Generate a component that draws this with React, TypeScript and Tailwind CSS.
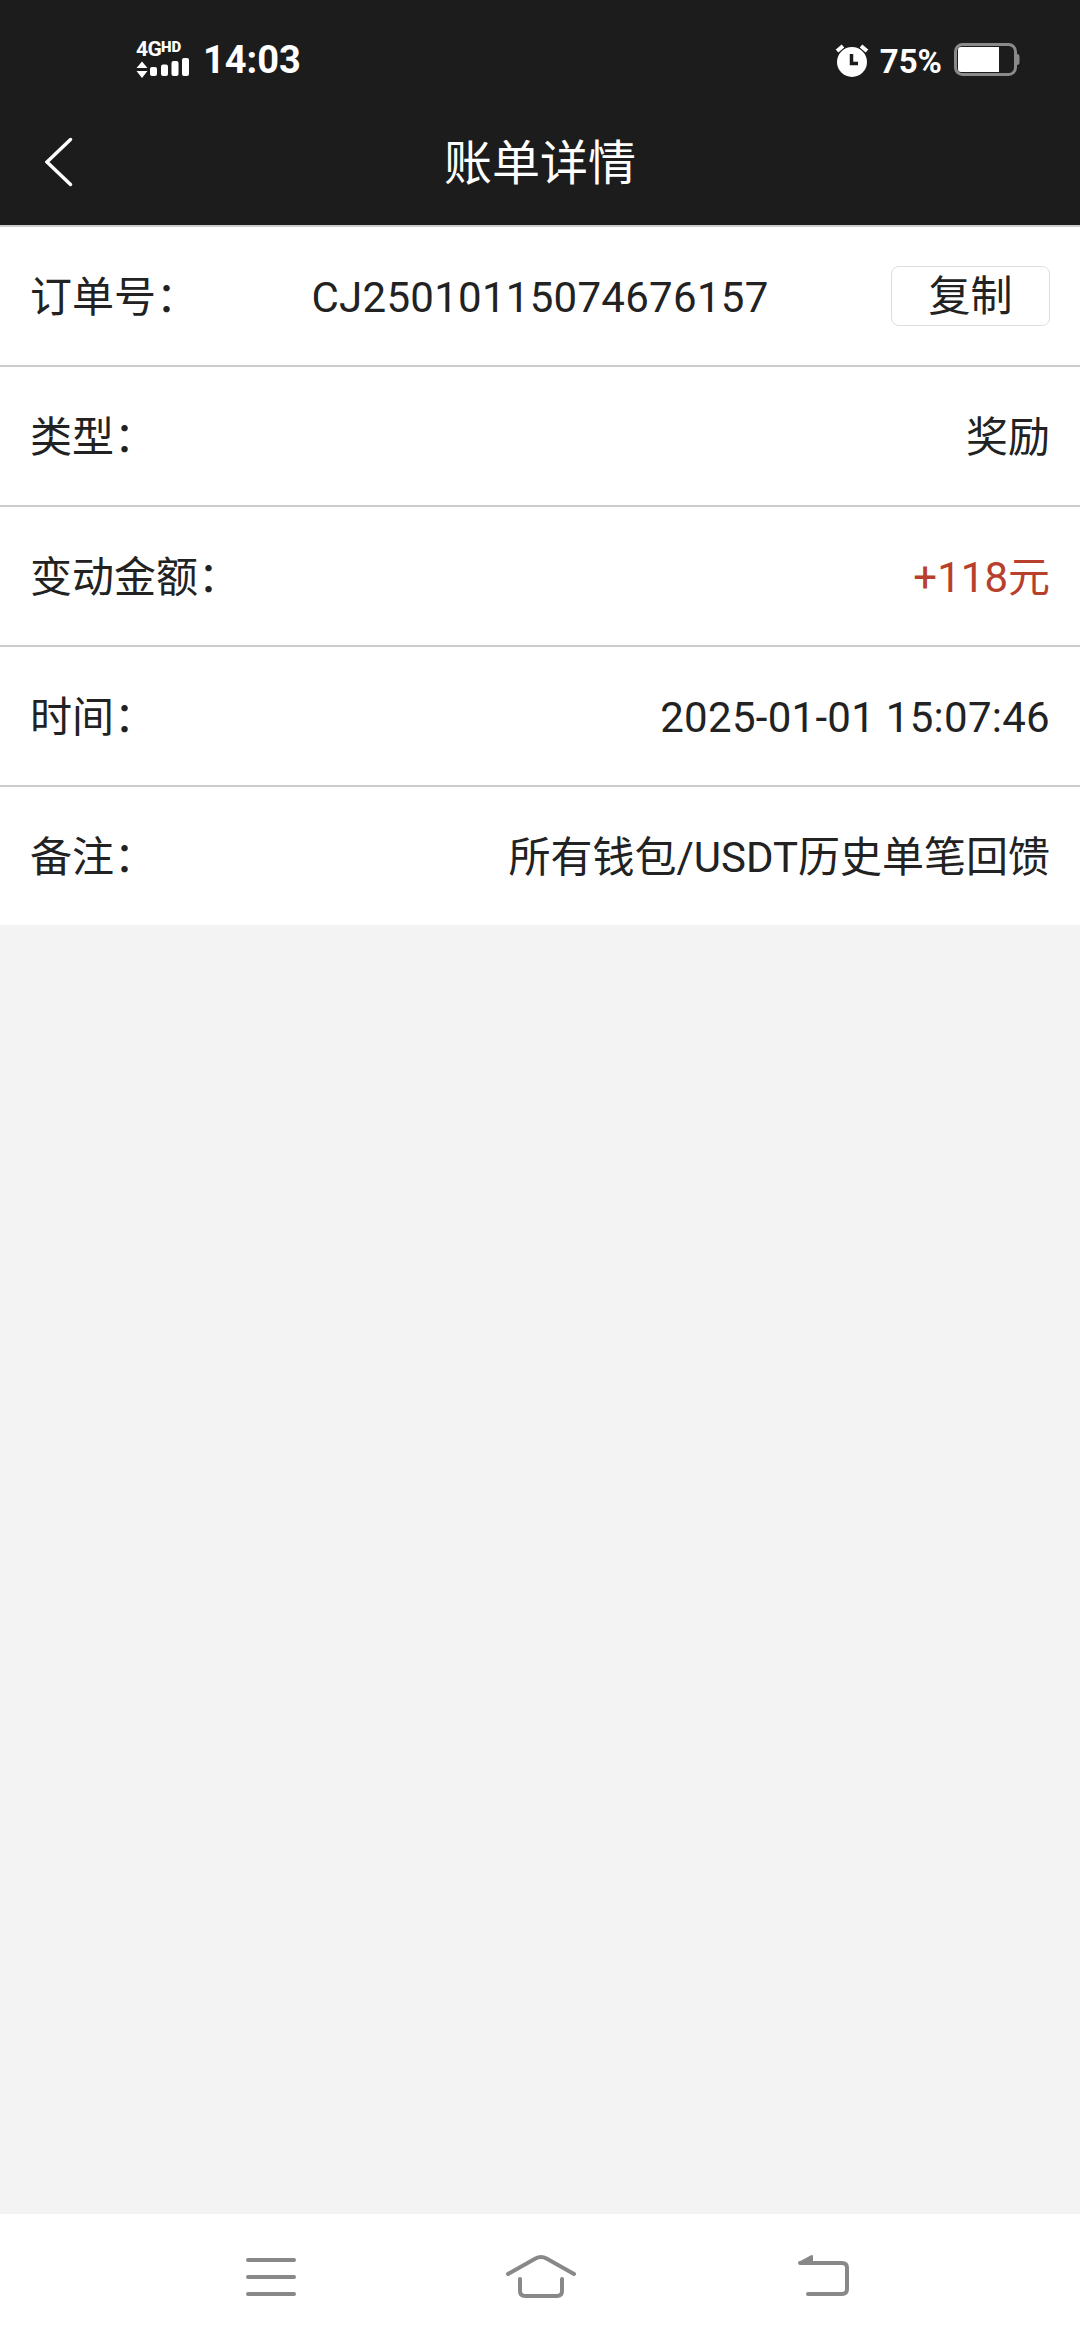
import React from "react";

type Row = {
  label: string;
  value: string;
  valueClass?: string;
};

const rows: Row[] = [
  { label: "类型：", value: "奖励" },
  { label: "变动金额：", value: "+118元", valueClass: "text-[#b93f2d]" },
  {
    label: "时间：",
    value: "2025-01-01 15:07:46",
    valueClass: "tracking-[0.28px]",
  },
  { label: "备注：", value: "所有钱包/USDT历史单笔回馈" },
];

const StatusBar: React.FunctionComponent<{}> = () => {
  return (
    <div className="flex h-[99px] items-center justify-between pt-5 pl-[136px] pr-[60px] font-bold">
      <div className="flex items-center">
        <div className="flex w-[54px] flex-col">
          <div className="flex h-[17px] items-start">
            <span className="w-[25px] text-[21px] leading-[17px] tracking-[-0.5px]">
              4G
            </span>
            <span className="text-[15px] leading-[12px] font-black">HD</span>
          </div>
          <svg width="54" height="20" viewBox="0 0 54 20" fill="white">
            <path d="M6 3.500 L11.500 10 H0.500 Z M0.500 13 H11.500 L6 20 Z" />
            <rect x="14" y="9" width="7" height="9" rx="2" />
            <rect x="25" y="6.500" width="7" height="11.500" rx="2" />
            <rect x="35.500" y="3" width="7" height="15" rx="2" />
            <rect x="46" y="0" width="7" height="18" rx="2" />
          </svg>
        </div>
        <span className="ml-[13px] pt-px text-[38px] leading-[44px]">
          14:03
        </span>
      </div>
      <div className="flex items-center">
        <svg width="34" height="36" viewBox="0 0 34 36" fill="none">
          <circle cx="17" cy="20" r="15" fill="white" />
          <path d="M2 9 L8 4 M26 4 L32 9" stroke="white" strokeWidth="4" />
          <path d="M16.500 12 V21.500 H23" stroke="#1c1c1c" strokeWidth="3.500" />
        </svg>
        <span className="ml-[11px] pt-1 text-[33px] leading-[38px]">75%</span>
        <svg
          className="ml-3"
          width="66"
          height="34"
          viewBox="0 0 66 34"
          fill="none"
        >
          <rect
            x="1.500"
            y="1.500"
            width="60"
            height="30"
            rx="7"
            stroke="#8a8a8a"
            strokeWidth="3"
          />
          <path d="M63 11 q2.500 0 2.500 3 v5 q0 3 -2.500 3 z" fill="#8a8a8a" />
          <path d="M7 4 H45 V29 H7 Q4 29 4 26 V7 Q4 4 7 4 Z" fill="white" />
        </svg>
      </div>
    </div>
  );
};

const TitleBar: React.FunctionComponent<{}> = () => {
  return (
    <div className="grid h-[126px] grid-cols-[1fr_auto_1fr] items-center">
      <button type="button" aria-label="返回" className="pl-[45px]">
        <svg width="28" height="50" viewBox="0 0 28 50" fill="none">
          <path
            d="M25.500 2.500 L2 25 L25.500 47.500"
            stroke="white"
            strokeWidth="3.400"
            strokeLinecap="round"
          />
        </svg>
      </button>
      <h1 className="pt-1 text-[48px] leading-[60px] font-normal">账单详情</h1>
    </div>
  );
};

const NavBar: React.FunctionComponent<{}> = () => {
  return (
    <nav className="flex h-[126px] items-center bg-white pl-[245px]">
      <svg width="52" height="40" viewBox="0 0 52 40" fill="none">
        <path
          d="M3 3 H49 M3 20 H49 M3 37 H49"
          stroke="#888888"
          strokeWidth="4"
          strokeLinecap="round"
        />
      </svg>
      <svg
        className="ml-52"
        width="72"
        height="46"
        viewBox="0 0 72 46"
        fill="none"
      >
        <path
          d="M3 20 L30.500 4.500 Q36 1.500 41.500 4.500 L69 20 M15 25 V37 Q15 42 20 42 H52 Q57 42 57 37 V25"
          stroke="#888888"
          strokeWidth="4"
          strokeLinecap="round"
        />
      </svg>
      <svg
        className="ml-[221px]"
        width="52"
        height="44"
        viewBox="0 0 52 44"
        fill="none"
      >
        <path
          d="M2 8 H44 Q49 8 49 13 V34 Q49 39 44 39 H10"
          stroke="#888888"
          strokeWidth="4"
          strokeLinecap="round"
        />
        <path d="M0.500 7 L13.500 0 Q15 0 15 1 V9 H2 Z" fill="#888888" />
      </svg>
    </nav>
  );
};

const App: React.FunctionComponent<{}> = () => {
  return (
    <div className="flex h-[2340px] w-[1080px] flex-col bg-[#f3f3f3] font-[Roboto,'Noto_Sans_CJK_SC',sans-serif]">
      <header className="bg-[#1c1c1c] text-white">
        <StatusBar />
        <TitleBar />
      </header>
      <main className="flex-1 text-[42px] leading-[56px] text-[#222222]">
        <div className="grid h-[140px] grid-cols-[1fr_auto_1fr] items-center border-t-2 border-[#cccccc] bg-white px-[30px]">
          <span className="pt-1">订单号：</span>
          <span className="pt-1 tracking-[0.28px]">CJ25010115074676157</span>
          <button
            type="button"
            className="h-[60px] w-[159px] justify-self-end rounded-lg border border-[#dddddd] pt-0.5 leading-[56px]"
          >
            复制
          </button>
        </div>
        {rows.map((row) => (
          <div
            key={row.label}
            className="flex h-[140px] items-center justify-between border-t-2 border-[#cccccc] bg-white px-[30px] pt-1"
          >
            <span>{row.label}</span>
            <span className={row.valueClass}>{row.value}</span>
          </div>
        ))}
      </main>
      <NavBar />
    </div>
  );
};

export default App;
